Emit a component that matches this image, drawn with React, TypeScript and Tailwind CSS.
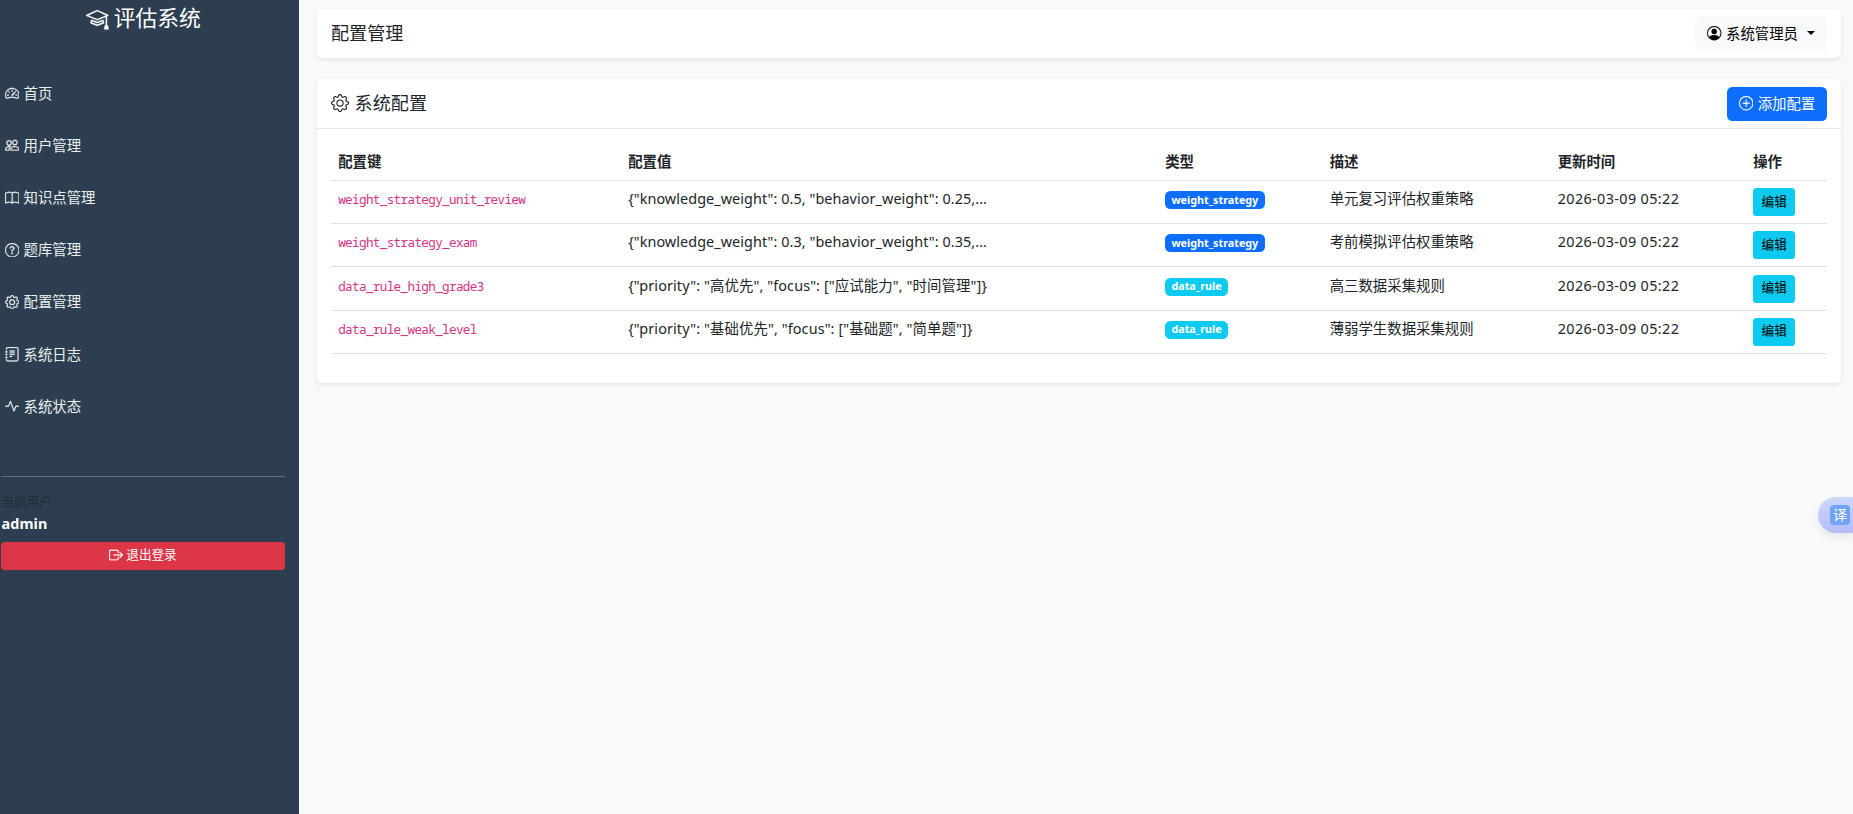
import React from "react";
import type { IconType } from "react-icons";
import {
  BsMortarboard,
  BsSpeedometer2,
  BsPeople,
  BsBook,
  BsQuestionCircle,
  BsGear,
  BsJournalText,
  BsActivity,
  BsBoxArrowRight,
  BsPersonCircle,
  BsPlusCircle,
} from "react-icons/bs";

type NavItem = { label: string; icon: IconType };

const navItems: NavItem[] = [
  { label: "首页", icon: BsSpeedometer2 },
  { label: "用户管理", icon: BsPeople },
  { label: "知识点管理", icon: BsBook },
  { label: "题库管理", icon: BsQuestionCircle },
  { label: "配置管理", icon: BsGear },
  { label: "系统日志", icon: BsJournalText },
  { label: "系统状态", icon: BsActivity },
];

type ConfigRow = {
  key: string;
  value: string;
  valueClass: string;
  type: "weight_strategy" | "data_rule";
  description: string;
  updatedAt: string;
};

const rows: ConfigRow[] = [
  {
    key: "weight_strategy_unit_review",
    value: '{"knowledge_weight": 0.5, "behavior_weight": 0.25,...',
    valueClass: "tracking-[0.07px]",
    type: "weight_strategy",
    description: "单元复习评估权重策略",
    updatedAt: "2026-03-09 05:22",
  },
  {
    key: "weight_strategy_exam",
    value: '{"knowledge_weight": 0.3, "behavior_weight": 0.35,...',
    valueClass: "tracking-[0.07px]",
    type: "weight_strategy",
    description: "考前模拟评估权重策略",
    updatedAt: "2026-03-09 05:22",
  },
  {
    key: "data_rule_high_grade3",
    value: '{"priority": "高优先", "focus": ["应试能力", "时间管理"]}',
    valueClass: "tracking-[0.11px]",
    type: "data_rule",
    description: "高三数据采集规则",
    updatedAt: "2026-03-09 05:22",
  },
  {
    key: "data_rule_weak_level",
    value: '{"priority": "基础优先", "focus": ["基础题", "简单题"]}',
    valueClass: "tracking-[0.11px]",
    type: "data_rule",
    description: "薄弱学生数据采集规则",
    updatedAt: "2026-03-09 05:22",
  },
];

const headers = ["配置键", "配置值", "类型", "描述", "更新时间", "操作"];

const rowGrid =
  "grid grid-cols-[290px_537px_164.5px_228px_195.5px_1fr] border-b border-[#dee2e6]";

function Sidebar() {
  return (
    <aside className="flex w-[299px] shrink-0 flex-col bg-[#2c3e50] text-white">
      <h4 className="flex h-[37px] items-center justify-center gap-[5px] pr-[12px] text-[21.8px] leading-[26px]">
        <BsMortarboard className="text-[22.5px]" strokeWidth={0.1} />
        <span className="pb-px">评估系统</span>
      </h4>
      <nav className="mt-[30.4px] flex flex-col">
        {navItems.map(({ label, icon: Icon }) => (
          <a key={label} className="flex h-[52.2px] items-center gap-[4.5px] pl-[4.6px] text-[#ecf0f1]">
            <Icon strokeWidth={0.3} />
            <span>{label}</span>
          </a>
        ))}
      </nav>
      <div className="mt-[43.2px] mr-[14px] ml-px flex flex-col border-t border-[#62707e] pt-[15px]">
        <span className="pl-[0.5px] text-[12.6px] leading-[19px] text-[#212529]/75">当前用户</span>
        <span className="pt-[2px] pl-[0.5px] text-[14.4px] leading-[22px] font-bold tracking-[0.1px]">admin</span>
        <button className="mt-[7px] flex h-[28px] items-center justify-center gap-[3px] rounded-[3.6px] bg-[#dc3545] pb-[2px] text-[12.6px]">
          <BsBoxArrowRight className="mt-px text-[14px]" strokeWidth={0.3} />
          <span>退出登录</span>
        </button>
      </div>
    </aside>
  );
}

function TopBar() {
  return (
    <header className="flex h-[49px] items-center justify-between rounded-[5px] bg-white pr-[14px] pl-[14px] shadow-[0_2px_4px_rgba(0,0,0,0.08)]">
      <h5 className="pb-[2px] text-[18.1px] leading-[22px]">配置管理</h5>
      <button className="flex h-[35px] items-center rounded-[5.4px] bg-[#f8f9fa] pr-[12px] pl-[12px] text-black">
        <BsPersonCircle strokeWidth={0.2} />
        <span className="ml-[4.5px]">系统管理员</span>
        <span className="mt-[-2px] ml-[9px] border-x-[4.3px] border-t-[4.3px] border-x-transparent border-t-black" />
      </button>
    </header>
  );
}

function ConfigTable() {
  return (
    <table className="block">
      <thead className="block">
        <tr className={`${rowGrid} h-[37px]`}>
          {headers.map((h) => (
            <th key={h} className="px-[7.2px] pt-[7px] text-left leading-[21.6px] font-bold">
              {h}
            </th>
          ))}
        </tr>
      </thead>
      <tbody className="block">
        {rows.map((row) => (
          <tr key={row.key} className={`${rowGrid} h-[43.2px] leading-[21.6px]`}>
            <td className="px-[7.2px] pt-[8.2px] font-['Noto_Sans_Mono','DejaVu_Sans_Mono',monospace] text-[12.6px] tracking-[-0.63px] text-[#d63384]">
              {row.key}
            </td>
            <td className={`px-[7.2px] pt-[7.2px] whitespace-nowrap ${row.valueClass}`}>{row.value}</td>
            <td className="px-[6.7px] pt-[10.2px]">
              <span
                className={`flex h-[18px] w-fit items-center rounded-[5.4px] px-[6.7px] pb-[2px] text-[10.8px] leading-[11px] font-bold tracking-[-0.02px] text-white ${
                  row.type === "weight_strategy" ? "bg-[#0d6efd]" : "bg-[#0dcaf0]"
                }`}
              >
                {row.type}
              </span>
            </td>
            <td className="px-[7.2px] pt-[7.2px]">{row.description}</td>
            <td className="px-[7.2px] pt-[7.2px] tracking-[0.37px] whitespace-nowrap">{row.updatedAt}</td>
            <td className="px-[7.2px] pt-[7.2px]">
              <button className="flex h-[28px] w-[42px] items-center justify-center rounded-[3.6px] bg-[#0dcaf0] pb-px text-[12.6px] text-black">
                编辑
              </button>
            </td>
          </tr>
        ))}
      </tbody>
    </table>
  );
}

export default function App() {
  return (
    <div className="flex h-[814px] w-full overflow-hidden bg-[#f8f9fa] font-['Noto_Sans','Noto_Sans_CJK_SC',sans-serif] text-[14.4px] leading-[21.6px] text-[#212529]">
      <Sidebar />
      <main className="flex flex-1 flex-col pt-[9px] pr-[12px] pl-[18px]">
        <TopBar />
        <section className="mt-[21px] flex h-[304px] flex-col rounded-[5px] bg-white shadow-[0_2px_4px_rgba(0,0,0,0.08)]">
          <div className="flex h-[50px] items-center justify-between border-b border-[#e3e7eb] px-[14px]">
            <h5 className="flex items-center gap-[5.5px] text-[18.1px] leading-[22px]">
              <BsGear />
              <span className="pb-[2px]">系统配置</span>
            </h5>
            <button className="flex h-[34px] w-[100px] items-center justify-center gap-[4.5px] rounded-[5.4px] bg-[#0d6efd] text-white">
              <BsPlusCircle strokeWidth={0.3} />
              <span>添加配置</span>
            </button>
          </div>
          <div className="px-[14px] pt-[15px]">
            <ConfigTable />
          </div>
        </section>
      </main>
      <div className="absolute top-[497px] right-0 flex h-[36px] w-[35px] items-center rounded-l-full bg-linear-to-b from-[#ccd8fd] to-[#b4bcf8] pl-[12px] shadow-[0_4px_10px_rgba(0,0,0,0.08)]">
        <span className="flex size-[20px] items-center justify-center rounded-[4px] bg-[#71a3f6] text-[14px] leading-none text-white">
          译
        </span>
      </div>
    </div>
  );
}
